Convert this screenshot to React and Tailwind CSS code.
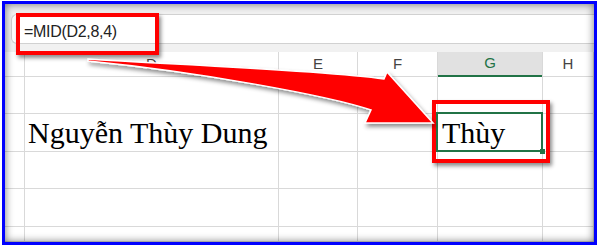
const cols = ["", "D", "E", "F", "G", "H"];
const rowHeights = ["h-[39px]", "h-[38px]", "h-[37px]", "h-[38px]", "flex-1"];

const gridCols = "grid grid-cols-[20px_254px_79px_80px_105px_1fr]";
const cellLine = "border-r border-b border-[#d9d9d9]";

function HeaderRow() {
  return (
    <div className={`${gridCols} h-[23px] bg-white`}>
      {cols.map((c, i) =>
        c === "G" ? (
          <div
            key={i}
            className="flex items-center justify-center bg-[#e1e1e1] border-r border-[#d9d9d9] border-b-2 border-b-[#217346] text-[15px] text-[#217346]"
          >
            {c}
          </div>
        ) : (
          <div
            key={i}
            className={`flex items-center justify-center ${cellLine} text-[15px] text-[#444]`}
          >
            {c}
          </div>
        )
      )}
    </div>
  );
}

function SheetRow({ h, children }) {
  return (
    <div className={`${gridCols} ${h}`}>
      {children ??
        cols.map((_, i) => <div key={i} className={cellLine} />)}
    </div>
  );
}

export default function App() {
  return (
    <div className="relative w-[599px] h-[246px] bg-white pt-[1px] pl-[2px] overflow-hidden font-['Liberation_Sans',Arial,sans-serif]">
      {/* Excel window, framed in blue */}
      <div className="relative w-[595px] h-[244px] border-[3px] border-[#0000fe] bg-white flex flex-col overflow-hidden">
        {/* Formula bar */}
        <div className="bg-[#f1f1f1] pt-[10px] pb-[8px] pl-[6px]">
          <div className="h-[30px] bg-white border border-r-0 border-[#d1d1d1] rounded-l-[6px] pl-[12px] pt-[9px] text-[16px] leading-[16px] tracking-[-0.3px] text-[#222]">
            =MID(D2,8,4)
          </div>
        </div>

        <HeaderRow />

        <SheetRow h={rowHeights[0]} />
        <SheetRow h={rowHeights[1]}>
          <div className={cellLine} />
          <div
            className={`${cellLine} flex items-end pl-[3px] pb-[3px] font-['Liberation_Serif','Times_New_Roman',serif] text-[30px] leading-none text-black whitespace-nowrap`}
          >
            Nguyễn Thùy Dung
          </div>
          <div className={cellLine} />
          <div className={cellLine} />
          <div
            className={`${cellLine} relative flex items-end pl-[4px] pb-[3px] font-['Liberation_Serif','Times_New_Roman',serif] text-[30px] leading-none text-black`}
          >
            Thùy
            <div className="absolute -left-[2px] -top-[2px] -right-[1px] -bottom-[1px] border-2 border-[#217346]" />
            <div className="absolute -right-[3px] -bottom-[3px] w-[5px] h-[5px] bg-[#217346]" />
          </div>
          <div className={cellLine} />
        </SheetRow>
        <SheetRow h={rowHeights[2]} />
        <SheetRow h={rowHeights[3]} />
        <SheetRow h={rowHeights[4]} />

        {/* inner shade of the frame */}
        <div className="absolute inset-0 pointer-events-none shadow-[inset_0_0_8px_rgba(0,0,0,0.55)]" />
      </div>

      {/* Annotation boxes */}
      <div className="absolute left-[16px] top-[13px] w-[143px] h-[42px] border-4 border-[#ff0000] shadow-[2px_3px_4px_rgba(0,0,0,0.45)]" />
      <div className="absolute left-[432px] top-[100px] w-[118px] h-[63px] border-4 border-[#ff0000] shadow-[2px_3px_4px_rgba(0,0,0,0.45)]" />

      {/* Curved arrow */}
      <svg
        className="absolute left-0 top-0 pointer-events-none"
        width="599"
        height="246"
        viewBox="0 0 599 246"
      >
        <defs>
          <filter id="arrowShadow" x="-10%" y="-20%" width="130%" height="160%">
            <feDropShadow dx="2" dy="3" stdDeviation="2" floodColor="#000" floodOpacity="0.45" />
          </filter>
        </defs>
        <path
          d="M88,59 C160,64 320,70 384,79 L387,72 L433,123 L365,123 L371,110 C330,96 200,72 88,61 Z"
          fill="#ff0000"
          stroke="#ffffff"
          strokeWidth="1.5"
          strokeLinejoin="miter"
          filter="url(#arrowShadow)"
        />
      </svg>
    </div>
  );
}
